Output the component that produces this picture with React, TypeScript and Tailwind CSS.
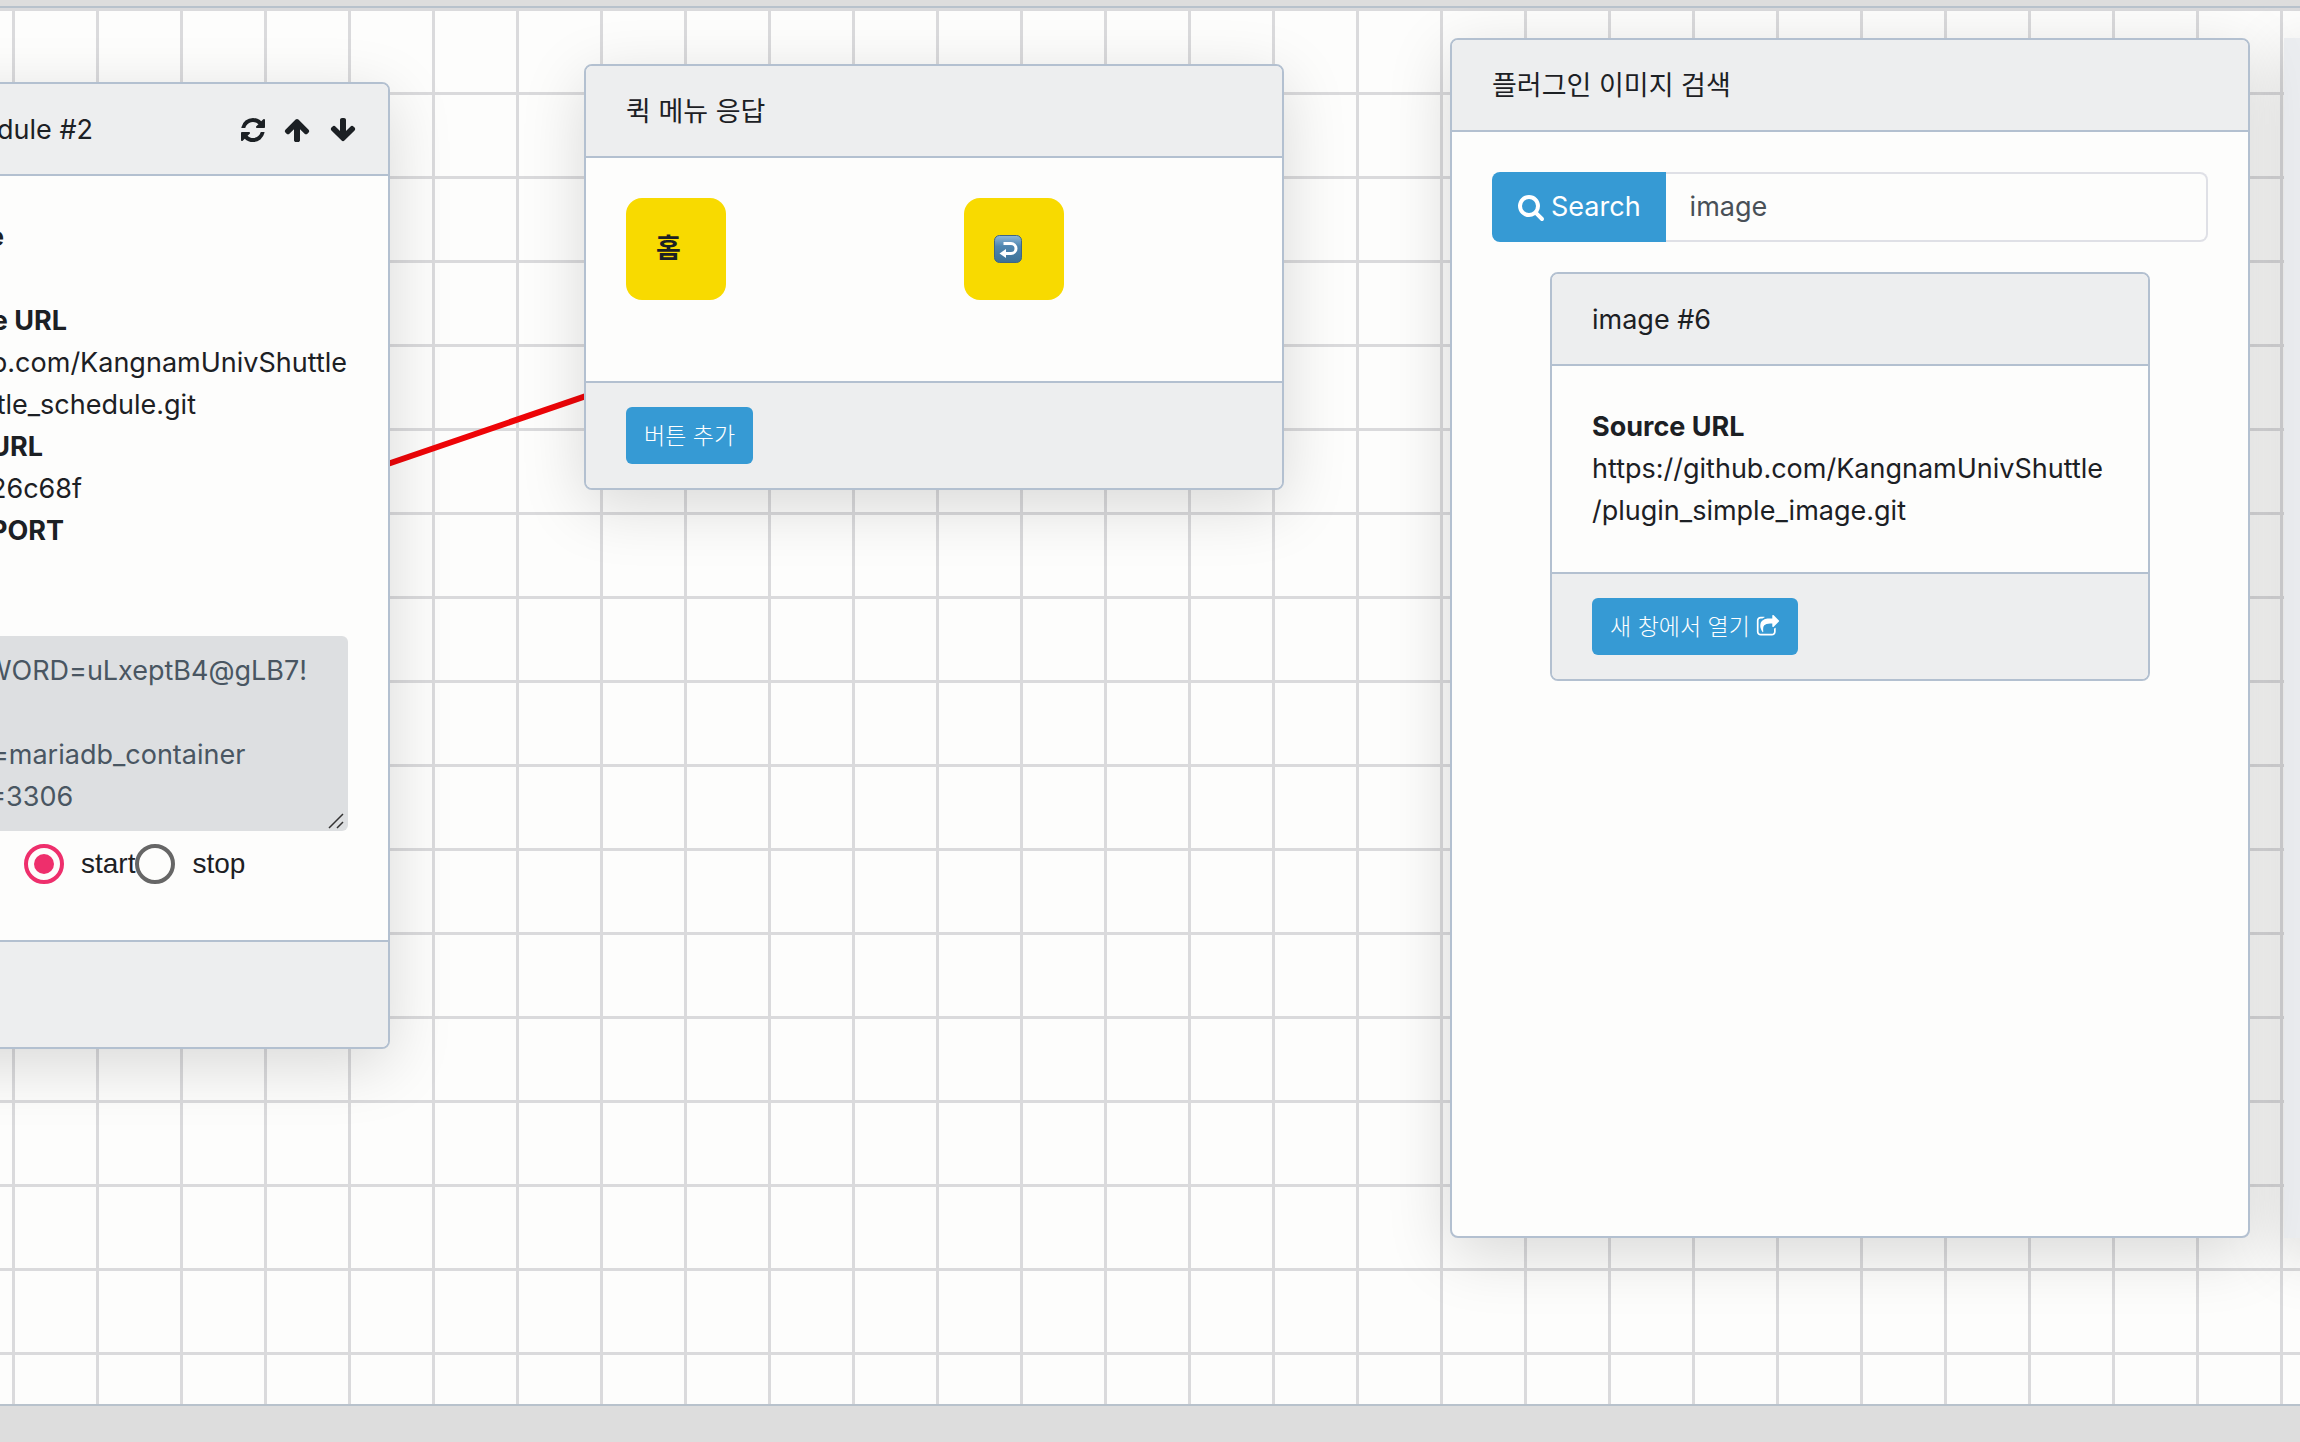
import type { ReactNode } from "react";

const ICONS = {
  refresh: {
    box: "0 0 1536 1536",
    d: "M1511 928q0 5-1 7-64 268-268 434.5T764 1536q-146 0-282.5-55T238 1324l-129 129q-19 19-45 19t-45-19-19-45V960q0-26 19-45t45-19h448q26 0 45 19t19 45-19 45l-137 137q71 66 161 102t187 36q134 0 250-65t186-179q11-17 53-117 8-23 30-23h192q13 0 22.5 9.5t9.5 22.5zm25-800v448q0 26-19 45t-45 19h-448q-26 0-45-19t-19-45 19-45l138-138Q969 256 768 256q-134 0-250 65T332 500q-11 17-53 117-8 23-30 23H50q-13 0-22.5-9.5T18 608v-7q65-268 270-434.5T768 0q146 0 284 55.5T1297 212l130-129q19-19 45-19t45 19 19 45z",
  },
  up: {
    box: "0 0 1792 1792",
    d: "M1675 971q0 51-37 90l-75 75q-38 38-91 38-54 0-90-38l-294-293v704q0 52-37.5 84.5t-90.5 32.5h-128q-53 0-90.5-32.5t-37.5-84.5v-704l-294 293q-36 38-90 38t-90-38l-75-75q-38-38-38-90 0-53 38-91l651-651q35-37 90-37 54 0 91 37l651 651q37 39 37 91z",
  },
  down: {
    box: "0 0 1792 1792",
    d: "M1675 832q0 53-37 90l-651 652q-39 37-91 37-53 0-90-37l-651-652q-38-36-38-90 0-53 38-91l74-75q39-37 91-37 53 0 90 37l294 294v-704q0-52 38-90t90-38h128q52 0 90 38t38 90v704l294-294q37-37 90-37 52 0 91 37l75 75q37 39 37 91z",
  },
  search: {
    box: "0 0 1792 1792",
    d: "M1216 832q0-185-131.5-316.5t-316.5-131.5-316.5 131.5-131.5 316.5 131.5 316.5 316.5 131.5 316.5-131.5 131.5-316.5zm512 832q0 52-38 90t-90 38q-54 0-90-38l-343-342q-179 124-399 124-143 0-273.5-55.5t-225-150-150-225-55.5-273.5 55.5-273.5 150-225 225-150 273.5-55.5 273.5 55.5 225 150 150 225 55.5 273.5q0 220-124 399l343 343q37 37 37 90z",
  },
  share: {
    box: "0 0 1792 1792",
    d: "M1472 989v259q0 119-84.5 203.5t-203.5 84.5h-832q-119 0-203.5-84.5t-84.5-203.5v-832q0-119 84.5-203.5t203.5-84.5h255q13 0 22.5 9.5t9.5 22.5q0 27-26 32-77 26-133 60-10 4-16 4h-112q-66 0-113 47t-47 113v832q0 66 47 113t113 47h832q66 0 113-47t47-113v-214q0-19 18-29 28-13 54-37 16-16 35-8 21 9 21 29zm237-496l-384 384q-18 19-45 19-12 0-25-5-39-17-39-59v-192h-160q-323 0-438 131-119 137-74 473 3 23-20 34-8 2-12 2-16 0-26-13-10-14-21-31t-39.5-68.5-49.5-99.5-38.5-114-17.5-122q0-49 3.5-91t14-90 28-88 47-81.5 68.5-74 94.5-61.5 124.5-48.5 159.5-30.5 196.5-11h160v-192q0-42 39-59 13-5 25-5 26 0 45 19l384 384q19 19 19 45t-19 45z",
  },
};

function Icon({ name, className }: { name: keyof typeof ICONS; className: string }) {
  return (
    <svg viewBox={ICONS[name].box} fill="currentColor" className={className} aria-hidden="true">
      <path d={ICONS[name].d} />
    </svg>
  );
}

function ReturnEmoji() {
  return (
    <svg viewBox="0 0 28 28" className="size-7" role="img" aria-label="돌아가기">
      <defs>
        <linearGradient id="tile" x1="0" y1="0" x2="0" y2="1">
          <stop offset="0" stopColor="#8fb8d8" />
          <stop offset="0.4" stopColor="#4f86b0" />
          <stop offset="1" stopColor="#3d7196" />
        </linearGradient>
      </defs>
      <rect x="0.5" y="0.5" width="27" height="27" rx="5" fill="url(#tile)" stroke="#3f6684" />
      <path d="M9.5 8.5H17a5 5 0 0 1 0 10h-6" fill="none" stroke="#fff" strokeWidth="3" />
      <path d="M5.5 18.5l6.5-4.5v9z" fill="#fff" />
    </svg>
  );
}

function Card({ title, actions, footer, className, children }: {
  title: ReactNode;
  actions?: ReactNode;
  footer?: ReactNode;
  className: string;
  children: ReactNode;
}) {
  return (
    <section className={`flex flex-col overflow-hidden rounded-lg border-2 border-[#b3c0d0] bg-[#fdfdfc] ${className}`}>
      <header className="flex items-center justify-between border-b-2 border-[#b3c0d0] bg-[#edeeef] px-10 pt-[25px] pb-[23px]">
        <h2>{title}</h2>
        {actions}
      </header>
      <div className="flex-1 p-10">{children}</div>
      {footer && <footer className="border-t-2 border-[#b3c0d0] bg-[#edeeef] px-10 py-6">{footer}</footer>}
    </section>
  );
}

const END_ALIGNED = "flex justify-end whitespace-nowrap";

function Radio({ label, checked }: { label: string; checked?: boolean }) {
  return (
    <label className="flex items-center font-['Liberation_Sans',sans-serif] text-[28px]">
      <span className="grid size-10 place-items-center">
        <input
          type="radio"
          name="power"
          defaultChecked={checked}
          className="peer col-start-1 row-start-1 size-10 appearance-none rounded-full border-4 border-[#666666] checked:border-[#ee2f6c]"
        />
        <span className="col-start-1 row-start-1 hidden size-5 rounded-full bg-[#ee2f6c] peer-checked:block" />
      </span>
      <span className="pl-[17px]">{label}</span>
    </label>
  );
}

const SMALL_BUTTON =
  "flex h-[57px] items-center gap-1.5 rounded-md bg-[#369ad4] px-[18px] text-[23px] font-light text-white";

export default function App() {
  return (
    <div className="flex h-screen flex-col overflow-hidden bg-[#dddddd] pt-1.5 pb-9 font-['Inter','Noto_Sans_CJK_KR',sans-serif] text-[27px] leading-[42px] text-[#1c2024]">
      <main className="relative flex-1 overflow-hidden border-y-2 border-[#b8c2cc] bg-[#fdfdfc] bg-[linear-gradient(to_right,#dadadc_3px,transparent_3px),linear-gradient(to_bottom,#dadadc_3px,transparent_3px)] bg-[length:84px_84px] bg-[position:12px_0]">
        <svg className="absolute top-0 left-0 h-full w-full" aria-hidden="true">
          <line x1="300" y1="486" x2="700" y2="349" stroke="#ee0508" strokeWidth="6" />
        </svg>

        <div className="absolute top-[30px] left-[2284px] h-[1200px] w-20 bg-[#ebedf0] shadow-[0_16px_64px_rgba(0,0,0,0.15)]" />

        <Card
          title={<span className={`${END_ALIGNED} w-[261px]`}>shuttle_schedule #2</span>}
          className="absolute top-[74px] -left-[210px] h-[967px] w-[600px] shadow-[0_16px_64px_rgba(0,0,0,0.15)]"
          actions={
            <div className="-mr-[9px] flex items-center gap-[18px]">
              <button type="button" aria-label="새로고침"><Icon name="refresh" className="size-6" /></button>
              <button type="button" aria-label="위로"><Icon name="up" className="size-7" /></button>
              <button type="button" aria-label="아래로"><Icon name="down" className="size-7" /></button>
            </div>
          }
          footer={<div className="h-[57px]" />}
        >
          <dl>
            <dt className={`${END_ALIGNED} w-[172px] font-bold`}>Plugin Name</dt>
            <dd>schedule</dd>
            <dt className={`${END_ALIGNED} w-[235px] font-bold`}>Image Source URL</dt>
            <dd>
              <span className={`${END_ALIGNED} w-[515px]`}>https://github.com/KangnamUnivShuttle</span>
              <span className={`${END_ALIGNED} w-[364px]`}>/plugin_shuttle_schedule.git</span>
            </dd>
            <dt className={`${END_ALIGNED} w-[211px] font-bold`}>Container URL</dt>
            <dd className={`${END_ALIGNED} w-[250px]`}>http://plugin_26c68f</dd>
            <dt className={`${END_ALIGNED} w-[232px] font-bold`}>External PORT</dt>
            <dd>3000</dd>
          </dl>
          <label htmlFor="env" className="block font-bold">ENV</label>
          <div className="relative">
            <textarea
              id="env"
              defaultValue={"DB_PASSWORD=uLxeptB4@gLB7!\n\nDB_HOST=mariadb_container\nDB_PORT=3306"}
              className="block h-[195px] w-full resize-none overflow-hidden rounded-md bg-[#dddfe1] py-3.5 pr-2 pl-[34px] text-[#495662]"
            />
            <svg viewBox="0 0 16 16" className="absolute right-1 bottom-0.5 size-4" aria-hidden="true">
              <path d="M1 15L15 1M9 15l6-6" stroke="#333" strokeWidth="1.5" />
            </svg>
          </div>
          <div className="flex items-center pt-3 pl-48">
            <Radio label="start" checked />
            <Radio label="stop" />
          </div>
        </Card>

        <Card
          title="퀵 메뉴 응답"
          className="absolute top-[56px] left-[584px] w-[700px] shadow-[0_16px_64px_rgba(0,0,0,0.15)]"
          footer={<button type="button" className={SMALL_BUTTON}>버튼 추가</button>}
        >
          <div className="grid grid-cols-2 gap-[60px] pb-[41px]">
            <button type="button" className="flex h-[102px] w-[100px] items-center rounded-2xl bg-[#f8da00] pl-[30px] font-bold">홈</button>
            <button type="button" className="flex h-[102px] w-[100px] items-center rounded-2xl bg-[#f8da00] pl-[30px]"><ReturnEmoji /></button>
          </div>
        </Card>

        <Card
          title="플러그인 이미지 검색"
          className="absolute top-[30px] left-[1450px] h-[1200px] w-[800px] shadow-[0_16px_64px_rgba(0,0,0,0.15)]"
        >
          <form className="flex h-[70px]">
            <button type="button" className="flex items-center gap-1.5 rounded-l-lg bg-[#369ad4] px-[25px] text-white">
              <Icon name="search" className="size-7" />
              Search
            </button>
            <input
              type="text"
              aria-label="Search"
              defaultValue="image"
              className="min-w-0 flex-1 rounded-r-lg border-2 border-l-0 border-[#dfe0e6] bg-transparent px-6 text-[#495057]"
            />
          </form>
          <Card
            title="image #6"
            className="mx-[58px] mt-[30px]"
            footer={
              <button type="button" className={SMALL_BUTTON}>
                새 창에서 열기
                <Icon name="share" className="size-6" />
              </button>
            }
          >
            <dl>
              <dt className="font-bold">Source URL</dt>
              <dd>
                https://github.com/KangnamUnivShuttle<br />/plugin_simple_image.git
              </dd>
            </dl>
          </Card>
        </Card>
      </main>
    </div>
  );
}
